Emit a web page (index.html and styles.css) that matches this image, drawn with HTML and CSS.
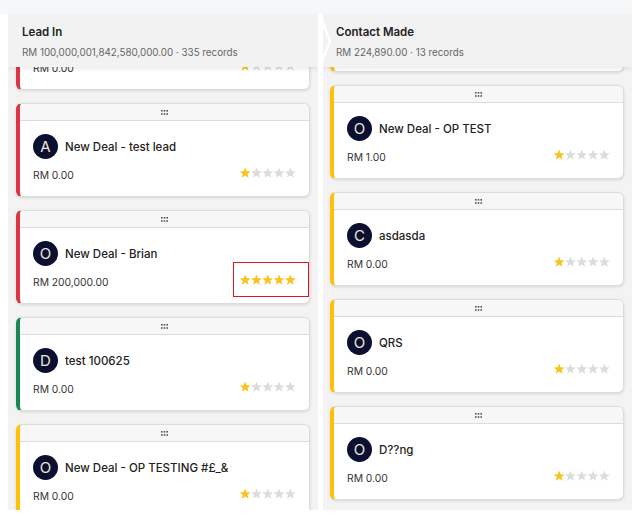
FILE: index.html
```html
<!DOCTYPE html>
<html lang="en">
<head>
	<meta charset="UTF-8">
	<title>Pipeline</title>
	<link rel="stylesheet" href="styles.css">
</head>
<body>
	<div class="topband"></div>
	<div class="board">
		<section class="column">
			<header class="column-head">
				<h2>Lead In</h2>
				<p>RM 100,000,001,842,580,000.00 · 335 records</p>
			</header>
			<div class="cards cards-lead">
				<div class="card edge-red">
					<div class="grip"><svg width="7" height="5" viewBox="0 0 7 5"><g fill="#555"><rect x="0" y="0" width="1.6" height="1.6"/><rect x="2.7" y="0" width="1.6" height="1.6"/><rect x="5.4" y="0" width="1.6" height="1.6"/><rect x="0" y="3.2" width="1.6" height="1.6"/><rect x="2.7" y="3.2" width="1.6" height="1.6"/><rect x="5.4" y="3.2" width="1.6" height="1.6"/></g></svg></div>
					<div class="card-body">
						<div class="card-title"><span class="avatar">N</span><span class="name">New Deal</span></div>
						<div class="card-foot">
							<span class="amount">RM 0.00</span>
							<span class="stars"><i class="star on"></i><i class="star"></i><i class="star"></i><i class="star"></i><i class="star"></i></span>
						</div>
					</div>
				</div>
				<div class="card edge-red">
					<div class="grip"><svg width="7" height="5" viewBox="0 0 7 5"><g fill="#555"><rect x="0" y="0" width="1.6" height="1.6"/><rect x="2.7" y="0" width="1.6" height="1.6"/><rect x="5.4" y="0" width="1.6" height="1.6"/><rect x="0" y="3.2" width="1.6" height="1.6"/><rect x="2.7" y="3.2" width="1.6" height="1.6"/><rect x="5.4" y="3.2" width="1.6" height="1.6"/></g></svg></div>
					<div class="card-body">
						<div class="card-title"><span class="avatar">A</span><span class="name">New Deal - test lead</span></div>
						<div class="card-foot">
							<span class="amount">RM 0.00</span>
							<span class="stars"><i class="star on"></i><i class="star"></i><i class="star"></i><i class="star"></i><i class="star"></i></span>
						</div>
					</div>
				</div>
				<div class="card edge-red">
					<div class="grip"><svg width="7" height="5" viewBox="0 0 7 5"><g fill="#555"><rect x="0" y="0" width="1.6" height="1.6"/><rect x="2.7" y="0" width="1.6" height="1.6"/><rect x="5.4" y="0" width="1.6" height="1.6"/><rect x="0" y="3.2" width="1.6" height="1.6"/><rect x="2.7" y="3.2" width="1.6" height="1.6"/><rect x="5.4" y="3.2" width="1.6" height="1.6"/></g></svg></div>
					<div class="card-body">
						<div class="card-title"><span class="avatar">O</span><span class="name">New Deal - Brian</span></div>
						<div class="card-foot">
							<span class="amount">RM 200,000.00</span>
							<span class="stars"><i class="star on"></i><i class="star on"></i><i class="star on"></i><i class="star on"></i><i class="star on"></i></span>
						</div>
					</div>
					<div class="highlight"></div>
				</div>
				<div class="card edge-green">
					<div class="grip"><svg width="7" height="5" viewBox="0 0 7 5"><g fill="#555"><rect x="0" y="0" width="1.6" height="1.6"/><rect x="2.7" y="0" width="1.6" height="1.6"/><rect x="5.4" y="0" width="1.6" height="1.6"/><rect x="0" y="3.2" width="1.6" height="1.6"/><rect x="2.7" y="3.2" width="1.6" height="1.6"/><rect x="5.4" y="3.2" width="1.6" height="1.6"/></g></svg></div>
					<div class="card-body">
						<div class="card-title"><span class="avatar">D</span><span class="name">test 100625</span></div>
						<div class="card-foot">
							<span class="amount">RM 0.00</span>
							<span class="stars"><i class="star on"></i><i class="star"></i><i class="star"></i><i class="star"></i><i class="star"></i></span>
						</div>
					</div>
				</div>
				<div class="card edge-yellow">
					<div class="grip"><svg width="7" height="5" viewBox="0 0 7 5"><g fill="#555"><rect x="0" y="0" width="1.6" height="1.6"/><rect x="2.7" y="0" width="1.6" height="1.6"/><rect x="5.4" y="0" width="1.6" height="1.6"/><rect x="0" y="3.2" width="1.6" height="1.6"/><rect x="2.7" y="3.2" width="1.6" height="1.6"/><rect x="5.4" y="3.2" width="1.6" height="1.6"/></g></svg></div>
					<div class="card-body">
						<div class="card-title"><span class="avatar">O</span><span class="name">New Deal - OP TESTING #£_&amp;</span></div>
						<div class="card-foot">
							<span class="amount">RM 0.00</span>
							<span class="stars"><i class="star on"></i><i class="star"></i><i class="star"></i><i class="star"></i><i class="star"></i></span>
						</div>
					</div>
				</div>
			</div>
		</section>

		<section class="column">
			<header class="column-head head-next">
				<svg class="chevron" width="14" height="54" viewBox="0 0 14 54"><polyline points="1.5,0 12,27 1.5,54" fill="none" stroke="#fff" stroke-width="2.5"/></svg>
				<h2>Contact Made</h2>
				<p>RM 224,890.00 · 13 records</p>
			</header>
			<div class="cards cards-contact">
				<div class="card edge-yellow">
					<div class="grip"><svg width="7" height="5" viewBox="0 0 7 5"><g fill="#555"><rect x="0" y="0" width="1.6" height="1.6"/><rect x="2.7" y="0" width="1.6" height="1.6"/><rect x="5.4" y="0" width="1.6" height="1.6"/><rect x="0" y="3.2" width="1.6" height="1.6"/><rect x="2.7" y="3.2" width="1.6" height="1.6"/><rect x="5.4" y="3.2" width="1.6" height="1.6"/></g></svg></div>
					<div class="card-body">
						<div class="card-title"><span class="avatar">N</span><span class="name">New Deal</span></div>
						<div class="card-foot">
							<span class="amount">RM 0.00</span>
							<span class="stars"><i class="star on"></i><i class="star"></i><i class="star"></i><i class="star"></i><i class="star"></i></span>
						</div>
					</div>
				</div>
				<div class="card edge-yellow">
					<div class="grip"><svg width="7" height="5" viewBox="0 0 7 5"><g fill="#555"><rect x="0" y="0" width="1.6" height="1.6"/><rect x="2.7" y="0" width="1.6" height="1.6"/><rect x="5.4" y="0" width="1.6" height="1.6"/><rect x="0" y="3.2" width="1.6" height="1.6"/><rect x="2.7" y="3.2" width="1.6" height="1.6"/><rect x="5.4" y="3.2" width="1.6" height="1.6"/></g></svg></div>
					<div class="card-body">
						<div class="card-title"><span class="avatar">O</span><span class="name">New Deal - OP TEST</span></div>
						<div class="card-foot">
							<span class="amount">RM 1.00</span>
							<span class="stars"><i class="star on"></i><i class="star"></i><i class="star"></i><i class="star"></i><i class="star"></i></span>
						</div>
					</div>
				</div>
				<div class="card edge-yellow">
					<div class="grip"><svg width="7" height="5" viewBox="0 0 7 5"><g fill="#555"><rect x="0" y="0" width="1.6" height="1.6"/><rect x="2.7" y="0" width="1.6" height="1.6"/><rect x="5.4" y="0" width="1.6" height="1.6"/><rect x="0" y="3.2" width="1.6" height="1.6"/><rect x="2.7" y="3.2" width="1.6" height="1.6"/><rect x="5.4" y="3.2" width="1.6" height="1.6"/></g></svg></div>
					<div class="card-body">
						<div class="card-title"><span class="avatar">C</span><span class="name">asdasda</span></div>
						<div class="card-foot">
							<span class="amount">RM 0.00</span>
							<span class="stars"><i class="star on"></i><i class="star"></i><i class="star"></i><i class="star"></i><i class="star"></i></span>
						</div>
					</div>
				</div>
				<div class="card edge-yellow">
					<div class="grip"><svg width="7" height="5" viewBox="0 0 7 5"><g fill="#555"><rect x="0" y="0" width="1.6" height="1.6"/><rect x="2.7" y="0" width="1.6" height="1.6"/><rect x="5.4" y="0" width="1.6" height="1.6"/><rect x="0" y="3.2" width="1.6" height="1.6"/><rect x="2.7" y="3.2" width="1.6" height="1.6"/><rect x="5.4" y="3.2" width="1.6" height="1.6"/></g></svg></div>
					<div class="card-body">
						<div class="card-title"><span class="avatar">O</span><span class="name">QRS</span></div>
						<div class="card-foot">
							<span class="amount">RM 0.00</span>
							<span class="stars"><i class="star on"></i><i class="star"></i><i class="star"></i><i class="star"></i><i class="star"></i></span>
						</div>
					</div>
				</div>
				<div class="card edge-yellow">
					<div class="grip"><svg width="7" height="5" viewBox="0 0 7 5"><g fill="#555"><rect x="0" y="0" width="1.6" height="1.6"/><rect x="2.7" y="0" width="1.6" height="1.6"/><rect x="5.4" y="0" width="1.6" height="1.6"/><rect x="0" y="3.2" width="1.6" height="1.6"/><rect x="2.7" y="3.2" width="1.6" height="1.6"/><rect x="5.4" y="3.2" width="1.6" height="1.6"/></g></svg></div>
					<div class="card-body">
						<div class="card-title"><span class="avatar">O</span><span class="name">D??ng</span></div>
						<div class="card-foot">
							<span class="amount">RM 0.00</span>
							<span class="stars"><i class="star on"></i><i class="star"></i><i class="star"></i><i class="star"></i><i class="star"></i></span>
						</div>
					</div>
				</div>
			</div>
		</section>
	</div>
</body>
</html>
```

FILE: styles.css
```css
body {
	margin: 0;
	background: #fff;
	font-family: "Inter", "Noto Sans", sans-serif;
	color: #222;
}

.topband {
	width: 632px;
	height: 14px;
	background: #f6f7f9;
}

.board {
	display: flex;
	gap: 5px;
	padding-left: 8px;
	width: 624px;
}

.column {
	width: 310px;
	height: 496px;
	overflow: hidden;
	background: #f3f3f3;
	display: flex;
	flex-direction: column;
}

.column + .column {
	width: 309px;
}

.column-head {
	position: relative;
	z-index: 2;
	height: 53px;
	box-sizing: border-box;
	padding: 11px 14px 0;
	background: #f2f2f2;
	box-shadow: 0 2px 4px rgba(0, 0, 0, 0.08);
	flex-shrink: 0;
}

.column-head h2 {
	margin: 0;
	font-size: 11.5px;
	font-weight: 600;
	line-height: 15px;
	color: #222;
}

.column-head p {
	margin: 6px 0 0;
	font-size: 9.8px;
	line-height: 14px;
	color: #666;
}

.head-next {
	padding-left: 13px;
}

.chevron {
	position: absolute;
	left: -5px;
	top: 0;
}

.cards {
	display: flex;
	flex-direction: column;
	gap: 13px;
	padding: 0 8px 0 7px;
	flex-shrink: 0;
}

.column:first-child .cards {
	padding: 0 8px;
}

.cards-lead {
	margin-top: -71px;
}

.cards-contact {
	margin-top: -89px;
}

.card {
	position: relative;
	background: #fff;
	border: 1px solid #dcdcdc;
	border-left: 4px solid #dc3545;
	border-radius: 6px;
	box-shadow: 0 1px 3px rgba(0, 0, 0, 0.12);
	overflow: hidden;
}

.edge-red { border-left-color: #dc3545; }
.edge-green { border-left-color: #198754; }
.edge-yellow { border-left-color: #ffc107; }

.grip {
	height: 16px;
	background: #f7f7f7;
	border-bottom: 1px solid #dcdcdc;
	display: flex;
	align-items: center;
	justify-content: center;
}

.card-body {
	padding: 13px 13px 15px 13px;
}

.card-title {
	display: flex;
	align-items: center;
	gap: 7px;
}

.avatar {
	width: 25px;
	height: 25px;
	border-radius: 50%;
	background: #0b1033;
	color: #efe7d2;
	font-size: 15px;
	line-height: 25px;
	text-align: center;
	flex-shrink: 0;
}

.name {
	font-size: 11.5px;
	font-weight: 500;
	color: #222;
	white-space: nowrap;
}

.card-foot {
	display: flex;
	align-items: center;
	justify-content: space-between;
	margin-top: 8px;
	height: 14px;
}

.amount {
	font-size: 10.3px;
	color: #333;
	position: relative;
	top: 1px;
}

.stars {
	display: flex;
	position: relative;
	top: -1px;
}

.star {
	width: 11.3px;
	height: 11px;
	background: #dcdcdc;
	clip-path: polygon(50% 0%, 63% 34%, 98% 36%, 71% 58%, 80% 93%, 50% 73%, 20% 93%, 29% 58%, 2% 36%, 37% 34%);
}

.star.on {
	background: #f8c41c;
}

.highlight {
	position: absolute;
	right: 0;
	top: 51px;
	width: 74px;
	height: 33px;
	border: 1px solid #e8141c;
}
```
